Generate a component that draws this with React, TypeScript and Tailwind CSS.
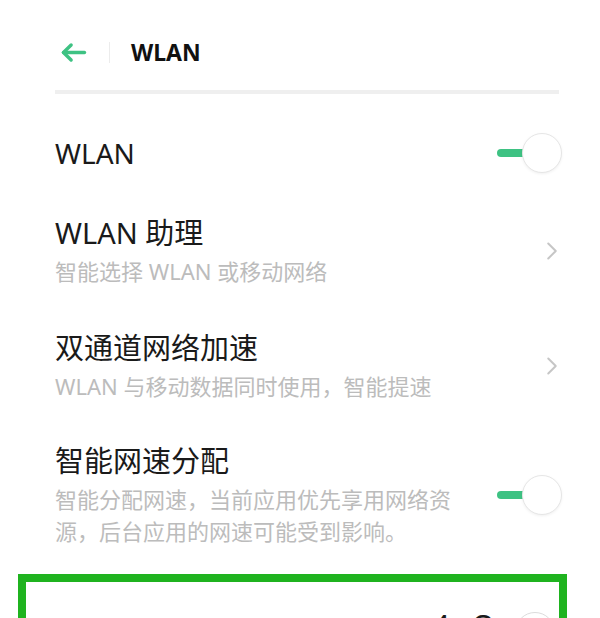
import { ChevronRight } from 'lucide-react';

const font = "font-['Noto_Sans','Noto_Sans_CJK_SC',sans-serif]";

function BackArrow() {
  return (
    <svg viewBox="0 0 28 22" className="ml-[5px] h-[21px] w-[27px]" fill="none" stroke="#3ec283" strokeWidth={3.6} strokeLinecap="round" strokeLinejoin="round">
      <path d="M25.5 11H3.5" />
      <path d="M11.5 3.2L3.5 11l8 7.8" />
    </svg>
  );
}

function Toggle() {
  return (
    <div className="relative -mr-[3px] h-[40px] w-[65px] shrink-0">
      <div className="absolute left-0 top-[16px] h-[8px] w-[36px] rounded-full bg-[#3ec283]" />
      <div className="absolute right-0 top-0 h-[40px] w-[40px] rounded-full border border-[#e6e6e6] bg-white shadow-[0_1px_3px_rgba(0,0,0,0.06)]" />
    </div>
  );
}

function Chevron() {
  return <ChevronRight className="-mr-[8px] h-[30px] w-[30px] shrink-0 text-[#c6c6c6]" strokeWidth={1.6} />;
}

const items = [
  {
    title: 'WLAN 助理',
    sub: '智能选择 WLAN 或移动网络',
    kind: 'chevron',
    pt: 'pt-[22px]',
  },
  {
    title: '双通道网络加速',
    sub: 'WLAN 与移动数据同时使用，智能提速',
    kind: 'chevron',
    pt: 'pt-[43px]',
  },
  {
    title: '智能网速分配',
    sub: '智能分配网速，当前应用优先享用网络资源，后台应用的网速可能受到影响。',
    kind: 'toggle',
    pt: 'pt-[41px]',
  },
];

export default function App() {
  return (
    <div className={`h-[618px] w-[600px] overflow-hidden bg-white ${font}`}>
      <div className="pl-[55px] pr-[41px]">
        {/* Header */}
        <div className="mt-[36px] flex h-[32px] items-center">
          <BackArrow />
          <div className="ml-[22px] h-[21px] w-px bg-[#ececec]" />
          <span className="ml-[21px] text-[23px] font-bold text-[#111]">WLAN</span>
        </div>
        <div className="mt-[22px] h-[4px] bg-[#efefef]" />

        {/* WLAN switch */}
        <div className="mt-[19px] flex h-[80px] items-center justify-between">
          <span className="text-[28px] text-[#1a1a1a]">WLAN</span>
          <Toggle />
        </div>

        {items.map((item) => (
          <div key={item.title} className={`flex items-center justify-between ${item.pt}`}>
            <div className="w-[400px]">
              <div className="text-[29px] leading-[36px] text-[#1a1a1a]">{item.title}</div>
              <div className="mt-[4px] text-[22px] leading-[32px] text-[#bcbcbc]">{item.sub}</div>
            </div>
            {item.kind === 'chevron' ? <Chevron /> : <Toggle />}
          </div>
        ))}
      </div>

      {/* Highlighted next row */}
      <div className="ml-[18px] mt-[27px] h-[120px] w-[549px] border-[8px] border-[#1fb31f]">
        <div className="flex items-start justify-end pr-[4px] pt-[26px]">
          <span className="text-[30px] leading-[36px] text-[#1a1a1a]">4</span>
          <span className="ml-[22px] text-[30px] leading-[36px] text-[#1a1a1a]">Q</span>
          <div className="ml-[20px] mt-[4px] h-[40px] w-[40px] rounded-full border border-[#dcdcdc] bg-white" />
        </div>
      </div>
    </div>
  );
}
